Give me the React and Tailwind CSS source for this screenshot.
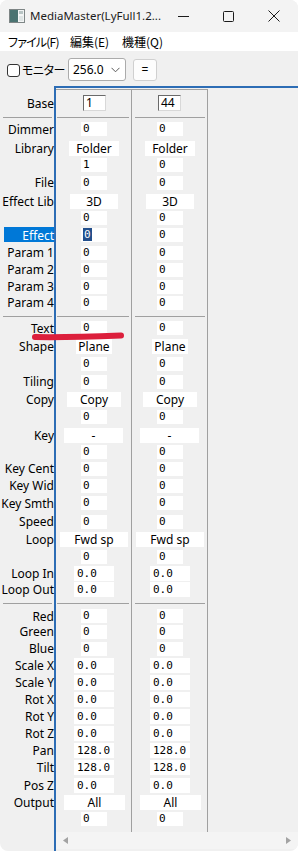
import React from 'react';

const UI = "font-['Noto_Sans','Noto_Sans_CJK_JP',sans-serif]";
const JP = "font-['Noto_Sans_CJK_JP',sans-serif] [font-feature-settings:'palt']";
const MONO = "font-['DejaVu_Sans_Mono',monospace]";

const rows = [
  { label: 'Base', h: 'h-[26px]', kind: 'base' },
  { sep: true, h: 'h-[3px] pt-[1px]' },
  { label: 'Dimmer', h: 'h-[20px]', kind: 'int' },
  { label: 'Library', h: 'h-[18px]', kind: 'btn', text: 'Folder', pos: 'ml-[13px] w-[50px]' },
  { label: '', h: 'h-[16px]', kind: 'int', v1: '1' },
  { label: 'File', h: 'h-[19px]', kind: 'int' },
  { label: 'Effect Lib', h: 'h-[18px]', kind: 'btn', text: '3D', pos: 'ml-[14px] w-[48px]' },
  { label: '', h: 'h-[16px]', kind: 'int' },
  { label: 'Effect', h: 'h-[18px]', kind: 'int', active: true },
  { label: 'Param 1', h: 'h-[17px]', kind: 'int' },
  { label: 'Param 2', h: 'h-[17px]', kind: 'int' },
  { label: 'Param 3', h: 'h-[17px]', kind: 'int' },
  { label: 'Param 4', h: 'h-[15px]', kind: 'int' },
  { sep: true, h: 'h-[9px] pt-[6px]' },
  { label: 'Text', h: 'h-[18px]', kind: 'int' },
  { label: 'Shape', h: 'h-[18px]', kind: 'btn', text: 'Plane', pos: 'ml-[20px] w-[36px]' },
  { label: '', h: 'h-[17px]', kind: 'int' },
  { label: 'Tiling', h: 'h-[19px]', kind: 'int' },
  { label: 'Copy', h: 'h-[17px]', kind: 'btn', text: 'Copy', pos: 'ml-[11px] w-[54px]' },
  { label: '', h: 'h-[18px]', kind: 'int' },
  { label: 'Key', h: 'h-[18px]', kind: 'btn', text: '-', pos: 'ml-[8px] w-[59px]' },
  { label: '', h: 'h-[16px]', kind: 'int' },
  { label: 'Key Cent', h: 'h-[17px]', kind: 'int' },
  { label: 'Key Wid', h: 'h-[17px]', kind: 'int' },
  { label: 'Key Smth', h: 'h-[18px]', kind: 'int' },
  { label: 'Speed', h: 'h-[19px]', kind: 'int' },
  { label: 'Loop', h: 'h-[17px]', kind: 'btn', text: 'Fwd sp', pos: 'ml-[4px] w-[68px]' },
  { label: '', h: 'h-[17px]', kind: 'int' },
  { label: 'Loop In', h: 'h-[17px]', kind: 'flt' },
  { label: 'Loop Out', h: 'h-[15px]', kind: 'flt' },
  { sep: true, h: 'h-[12px] pt-[6px]' },
  { label: 'Red', h: 'h-[14px]', kind: 'int' },
  { label: 'Green', h: 'h-[17px]', kind: 'int' },
  { label: 'Blue', h: 'h-[17px]', kind: 'int' },
  { label: 'Scale X', h: 'h-[17px]', kind: 'flt' },
  { label: 'Scale Y', h: 'h-[16px]', kind: 'flt' },
  { label: 'Rot X', h: 'h-[18px]', kind: 'flt' },
  { label: 'Rot Y', h: 'h-[17px]', kind: 'flt' },
  { label: 'Rot Z', h: 'h-[17px]', kind: 'flt' },
  { label: 'Pan', h: 'h-[17px]', kind: 'flt', v: '128.0' },
  { label: 'Tilt', h: 'h-[17px]', kind: 'flt', v: '128.0' },
  { label: 'Pos Z', h: 'h-[18px]', kind: 'flt' },
  { label: 'Output', h: 'h-[17px]', kind: 'btn', text: 'All', pos: 'ml-[8px] w-[61px]' },
  { label: '', h: 'h-[15px]', kind: 'int' },
];

const LabelRow = ({ row }) => {
  if (row.sep) {
    return (
      <div className={row.h}>
        <div className="h-px bg-[#a0a0a0] ml-[3px] mr-[2px]" />
      </div>
    );
  }
  return (
    <div className={`${row.h} relative flex items-center justify-end`}>
      {row.active && <div className="absolute left-[4px] top-[1px] w-[50px] h-[15px] bg-[#0078d7]" />}
      <span className={`relative whitespace-nowrap text-[12px] leading-[15px] ${UI} ${row.active ? 'text-white' : 'text-black'}`}>
        {row.label}
      </span>
    </div>
  );
};

const Cell = ({ row, col }) => {
  if (row.sep) {
    return (
      <div className={row.h}>
        <div className={`h-px bg-[#a0a0a0] mr-[2px] ${col === 0 ? 'ml-[1px]' : 'ml-[3px]'}`} />
      </div>
    );
  }
  let box = null;
  if (row.kind === 'base') {
    box = (
      <div
        className={`${col === 0 ? 'ml-[27px] w-[23px]' : 'ml-[26px] w-[23px]'} h-[16px] bg-white border border-t-[#6a6a6a] border-l-[#6a6a6a] border-r-[#d8d8d8] border-b-[#d8d8d8] pl-[2px] text-[12px] leading-[14px] text-black ${UI}`}
      >
        {col === 0 ? '1' : '44'}
      </div>
    );
  } else if (row.kind === 'int') {
    const v = col === 0 && row.v1 ? row.v1 : '0';
    box = (
      <div className={`ml-[25px] w-[26px] h-[14px] bg-white pl-[2px] text-[11px] leading-[14px] text-black ${MONO}`}>
        {row.active && col === 0 ? <span className="bg-[#234f8c] text-white px-px">{v}</span> : v}
      </div>
    );
  } else if (row.kind === 'flt') {
    box = (
      <div className={`ml-[18px] w-[40px] h-[15px] bg-white pl-[3px] text-[11px] leading-[15px] text-black ${MONO}`}>
        {row.v || '0.0'}
      </div>
    );
  } else {
    box = (
      <div className={`${row.pos} h-[15px] bg-white text-center text-[12px] leading-[15px] text-black ${UI}`}>
        {row.text}
      </div>
    );
  }
  return <div className={`${row.h} flex items-center`}>{box}</div>;
};

const Column = ({ col }) => (
  <div className="w-[76px] border-r border-t border-[#a0a0a0] flex flex-col">
    {rows.map((r, i) => (
      <Cell key={i} row={r} col={col} />
    ))}
    <div className="h-[6px]" />
  </div>
);

export default function App() {
  return (
    <div className="w-[298px] h-[851px] bg-white">
      <div className="relative w-[298px] h-[851px] rounded-[8px] overflow-hidden bg-[#f0f0f0] flex flex-col">
        {/* title bar */}
        <div className="h-[32px] bg-[#f3f3f3] flex items-center shrink-0">
          <svg className="ml-[9px]" width="16" height="14" viewBox="0 0 16 14">
            <rect x="0.5" y="0.5" width="15" height="13" fill="#f4f6f6" stroke="#7d8585" />
            <rect x="1" y="1" width="8" height="12" fill="#4a7371" />
            <rect x="10" y="2" width="4" height="3" fill="#b8c4c4" />
            <rect x="10" y="7" width="4" height="5" fill="#dfe5e5" />
          </svg>
          <span className={`ml-[5px] text-[11.5px] text-[#1b1b1b] ${UI}`}>MediaMaster(LyFull1.2...</span>
          <div className="ml-auto flex mr-[2px]">
            <div className="w-[45px] h-[32px] flex items-center justify-center">
              <svg width="11" height="11" viewBox="0 0 11 11"><path d="M0 5.5H11" stroke="#1b1b1b" strokeWidth="1" /></svg>
            </div>
            <div className="w-[45px] h-[32px] flex items-center justify-center">
              <svg width="11" height="11" viewBox="0 0 11 11"><rect x="0.5" y="0.5" width="10" height="10" rx="1" fill="none" stroke="#1b1b1b" /></svg>
            </div>
            <div className="w-[45px] h-[32px] flex items-center justify-center">
              <svg width="12" height="12" viewBox="0 0 12 12"><path d="M0.5 0.5L11.5 11.5M11.5 0.5L0.5 11.5" stroke="#1b1b1b" strokeWidth="1" /></svg>
            </div>
          </div>
        </div>

        {/* menu bar */}
        <div className={`h-[19px] bg-white flex items-center text-[12px] text-black shrink-0 ${JP}`}>
          <span className="pl-[8px] w-[70px] tracking-[-0.8px]">ファイル(F)</span>
          <span className="w-[52px]">編集(E)</span>
          <span>機種(Q)</span>
        </div>

        {/* toolbar */}
        <div className="h-[35px] flex items-center shrink-0">
          <div className="ml-[7px] mt-[3px] w-[13px] h-[13px] rounded-[3px] border border-[#333] bg-white" />
          <span className={`ml-[2px] mt-[2px] w-[46px] text-[12px] text-black tracking-[-0.5px] ${JP}`}>モニター</span>
          <div className="mt-[2px] w-[58px] h-[23px] rounded-[3px] border border-[#ababab] bg-white flex items-center">
            <span className={`pl-[4px] text-[12px] text-black ${UI}`}>256.0</span>
            <svg className="ml-auto mr-[5px]" width="9" height="6" viewBox="0 0 9 6">
              <path d="M0.5 0.8L4.5 4.8L8.5 0.8" fill="none" stroke="#5a5a5a" strokeWidth="1" />
            </svg>
          </div>
          <div className={`ml-[7px] mt-[2px] w-[24px] h-[22px] rounded-[3px] border border-[#d0d0d0] bg-[#fdfdfd] flex items-center justify-center text-[12px] text-black ${UI}`}>
            =
          </div>
        </div>

        {/* main */}
        <div className="flex flex-1 min-h-0">
          <div className="w-[54px] pt-[4px] flex flex-col shrink-0">
            {rows.map((r, i) => (
              <LabelRow key={i} row={r} />
            ))}
          </div>
          <div className="flex-1 border-l-2 border-t-2 border-[#2d6db5] flex flex-col">
            <div className="flex mt-[1px]">
              <Column col={0} />
              <Column col={1} />
            </div>
            <div className="h-[17px] bg-[#f4f4f4] flex items-center justify-between px-[7px]">
              <svg width="5" height="7" viewBox="0 0 5 7"><path d="M5 0L0 3.5L5 7Z" fill="#a3a3a3" /></svg>
              <svg width="5" height="7" viewBox="0 0 5 7"><path d="M0 0L5 3.5L0 7Z" fill="#a3a3a3" /></svg>
            </div>
          </div>
        </div>

        {/* red annotation stroke */}
        <svg className="absolute left-[30px] top-[329px]" width="96" height="14" viewBox="0 0 96 14">
          <path d="M5 8C30 8.5 65 7.5 91 6.5" fill="none" stroke="#dc1f3c" strokeWidth="6" strokeLinecap="round" />
        </svg>
      </div>
    </div>
  );
}
